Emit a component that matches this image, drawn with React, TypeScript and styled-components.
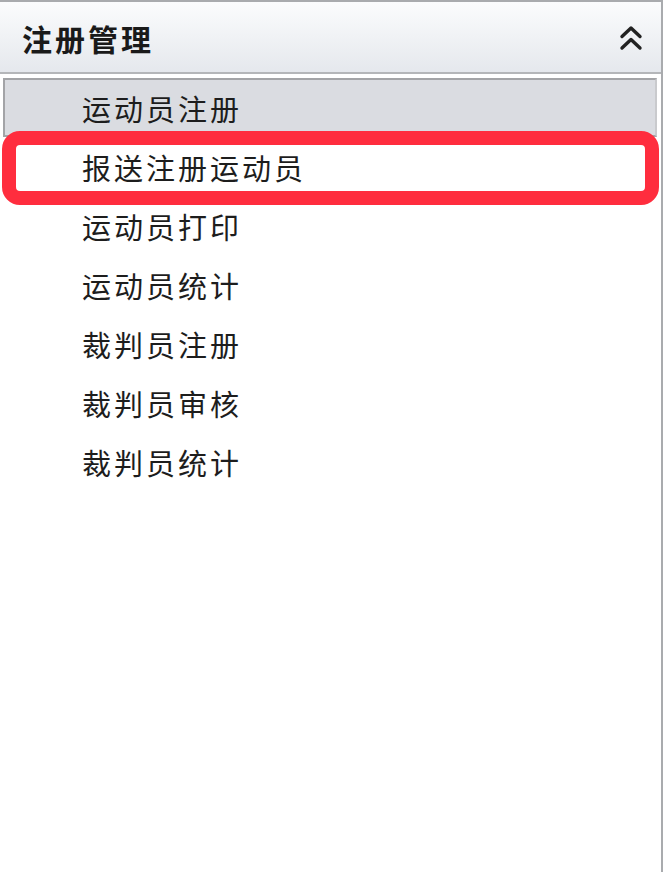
import type { FC } from 'react'
import styled, { createGlobalStyle } from 'styled-components'

const items = ['运动员注册', '报送注册运动员', '运动员打印', '运动员统计', '裁判员注册', '裁判员审核', '裁判员统计']

const App: FC = () => {
	return (
		<>
			<GlobalStyle />
			<Panel>
				<Header>
					<Title>注册管理</Title>
					<Toggle viewBox="0 0 24 28">
						<path d="M3 12.5l9-8.5 9 8.5" />
						<path d="M3 24l9-8.5 9 8.5" />
					</Toggle>
				</Header>
				<List>
					{items.map((label, i) => (
						<Item key={label} $active={i === 0} $marked={i === 1}>
							{label}
						</Item>
					))}
				</List>
			</Panel>
		</>
	)
}

const GlobalStyle = createGlobalStyle`
	html, body {
		margin: 0;
		padding: 0;
		background: #ffffff;
	}
	body {
		font-family: 'Noto Sans CJK SC', 'Noto Sans', sans-serif;
	}
`

const Panel = styled.section`
	width: 663px;
	height: 872px;
	box-sizing: border-box;
	border-top: 2px solid #a9abae;
	border-right: 2px solid #a9abae;
	background: #ffffff;
`

const Header = styled.header`
	height: 72px;
	box-sizing: border-box;
	display: flex;
	align-items: center;
	justify-content: space-between;
	padding: 2px 18px 0 22px;
	background: linear-gradient(to bottom, #fbfcfd, #e5e8ed);
	border-bottom: 2px solid #b4b6b9;
`

const Title = styled.h1`
	margin: 0;
	font-size: 30px;
	font-weight: 700;
	letter-spacing: 3px;
	color: #1a1a1a;
`

const Toggle = styled.svg`
	width: 24px;
	height: 28px;
	fill: none;
	stroke: #222222;
	stroke-width: 3.4;
	stroke-linecap: round;
	stroke-linejoin: round;
`

const List = styled.ul`
	list-style: none;
	margin: 0;
	padding: 4px 4px 0 3px;
`

const Item = styled.li<{ $active: boolean; $marked: boolean }>`
	position: relative;
	height: 59px;
	box-sizing: border-box;
	display: flex;
	align-items: center;
	padding-left: 77px;
	font-size: 29px;
	letter-spacing: 3px;
	color: #1d1d1d;
	background: ${(p) => (p.$active ? '#dadce1' : 'transparent')};
	border: 2px solid ${(p) => (p.$active ? '#a3a4a7' : 'transparent')};
	border-right-color: ${(p) => (p.$active ? '#c9cacd' : 'transparent')};

	${(p) =>
		p.$marked &&
		`
		&::after {
			content: '';
			position: absolute;
			left: -3px;
			right: -4px;
			top: -8px;
			bottom: -11px;
			border: 14px solid #ff2d3e;
			border-radius: 18px;
			pointer-events: none;
		}
	`}
`

export default App
